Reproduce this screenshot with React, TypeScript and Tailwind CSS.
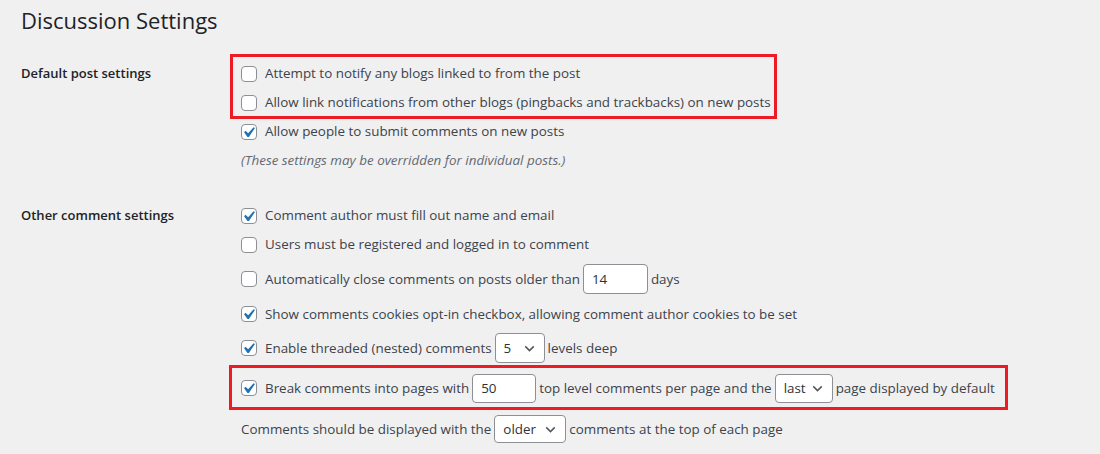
import { ReactNode } from "react";

const CheckBox = ({ checked = false }: { checked?: boolean }) => {
  return (
    <span className="w-[16px] h-[16px] shrink-0 rounded-[4px] border border-[#8c8f94] bg-white mr-[8px] overflow-visible">
      {checked && (
        <svg
          viewBox="0 0 20 20"
          className="block w-[21px] h-[21px] -ml-[4px] -mt-[3px]"
        >
          <path
            fill="#2271b1"
            d="M14.83 4.89l1.34.94-5.81 8.38H9.02L5.78 9.67l1.34-1.25 2.57 2.4z"
          />
        </svg>
      )}
    </span>
  );
};

const TextBox = ({ value, className }: { value: string; className: string }) => {
  return (
    <span
      className={`flex items-center shrink-0 rounded-[4px] border border-[#8c8f94] bg-white px-[8px] text-[#2c3338] ${className}`}
    >
      {value}
    </span>
  );
};

const SelectBox = ({ value, className }: { value: string; className: string }) => {
  return (
    <span
      className={`flex items-center justify-between shrink-0 rounded-[4px] border border-[#8c8f94] bg-white pl-[8px] pr-[6px] text-[#2c3338] ${className}`}
    >
      <span>{value}</span>
      <svg
        viewBox="0 0 20 20"
        className="w-[17px] h-[17px]"
      >
        <path
          d="M5 7.5l5 5 5-5"
          fill="none"
          stroke="#50575e"
          strokeWidth="1.7"
        />
      </svg>
    </span>
  );
};

const Row = ({ className, children }: { className: string; children: ReactNode }) => {
  return <div className={`flex items-center whitespace-nowrap ${className}`}>{children}</div>;
};

export default function App() {
  return (
    <div className="min-h-screen bg-[#f0f0f1] pl-[21px] font-['Open_Sans',sans-serif] text-[13.4px] text-[#3c434a]">
      <h1 className="pt-[5px] text-[22px] leading-[30px] text-[#1d2327]">Discussion Settings</h1>

      {/* Default post settings */}
      <div className="flex mt-[24px]">
        <div className="w-[220px] h-[29px] flex items-center text-[13px] font-semibold text-[#1d2327]">
          Default post settings
        </div>
        <div className="flex flex-col">
          <div className="relative">
            <div className="absolute -left-[11px] -top-[5px] w-[547px] h-[65px] border-[3px] border-[#ed1c24] pointer-events-none" />
            <Row className="h-[29px]">
              <CheckBox />
              Attempt to notify any blogs linked to from the post
            </Row>
            <Row className="h-[29px]">
              <CheckBox />
              Allow link notifications from other blogs (pingbacks and trackbacks) on new posts
            </Row>
          </div>
          <Row className="h-[29px]">
            <CheckBox checked />
            Allow people to submit comments on new posts
          </Row>
          <Row className="h-[29px] italic text-[#646970]">
            (These settings may be overridden for individual posts.)
          </Row>
        </div>
      </div>

      {/* Other comment settings */}
      <div className="flex mt-[26px]">
        <div className="w-[220px] h-[29px] flex items-center text-[13px] font-semibold text-[#1d2327]">
          Other comment settings
        </div>
        <div className="flex flex-col">
          <Row className="h-[29px]">
            <CheckBox checked />
            Comment author must fill out name and email
          </Row>
          <Row className="h-[29px]">
            <CheckBox />
            Users must be registered and logged in to comment
          </Row>
          <Row className="h-[40px]">
            <CheckBox />
            Automatically close comments on posts older than
            <TextBox
              value="14"
              className="w-[65px] h-[30px] mx-[3px]"
            />
            days
          </Row>
          <Row className="h-[30px]">
            <CheckBox checked />
            Show comments cookies opt-in checkbox, allowing comment author cookies to be set
          </Row>
          <Row className="h-[38px]">
            <CheckBox checked />
            Enable threaded (nested) comments
            <SelectBox
              value="5"
              className="w-[50px] h-[30px] mx-[3px]"
            />
            levels deep
          </Row>
          <div className="relative">
            <div className="absolute -left-[12px] -top-[2px] w-[779px] h-[45px] border-[3px] border-[#ed1c24] pointer-events-none" />
            <Row className="h-[42px]">
              <CheckBox checked />
              Break comments into pages with
              <TextBox
                value="50"
                className="w-[64px] h-[29px] mx-[3px]"
              />
              top level comments per page and the
              <SelectBox
                value="last"
                className="w-[58px] h-[29px] mx-[3px]"
              />
              page displayed by default
            </Row>
          </div>
          <Row className="h-[40px]">
            Comments should be displayed with the
            <SelectBox
              value="older"
              className="w-[72px] h-[28px] mx-[3px]"
            />
            comments at the top of each page
          </Row>
        </div>
      </div>
    </div>
  );
}
